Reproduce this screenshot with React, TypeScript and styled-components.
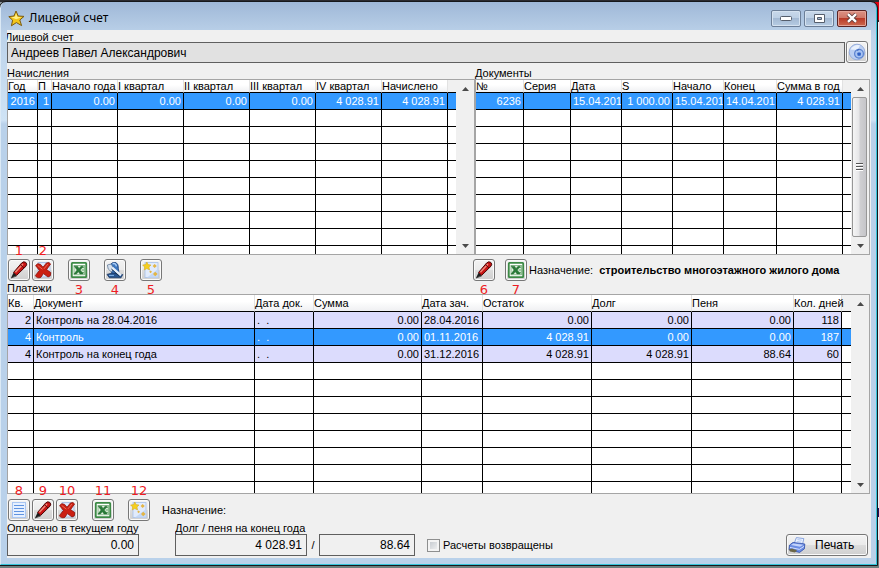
import React from "react";
import styled, { createGlobalStyle, css } from "styled-components";

const GlobalStyle = createGlobalStyle`
  *, *::before, *::after { box-sizing: border-box; }
  html, body { margin: 0; padding: 0; }
  body {
    font-family: "Liberation Sans", Arial, sans-serif;
    font-size: 11px;
    line-height: 12px;
    color: #000;
  }
  button, input { font: inherit; color: inherit; margin: 0; }
`;

/* ---------- window frame ---------- */

const Desktop = styled.div`
  min-height: 100vh;
  padding: 2px 2px 2px 0;
  background:
    linear-gradient(#2b2b30, #2b2b30) top / 100% 2px no-repeat,
    linear-gradient(#6c7d7d, #6c7d7d) bottom / 100% 2px no-repeat,
    linear-gradient(90deg, #8f9aa0, #8f9aa0) left top / 50% 20px no-repeat,
    linear-gradient(#e00010 0 20px, #222 20px 22px, #e4f1f8 22px 508px, #1a1060 508px 517px, #e4f1f8 517px 540px, #6c7d7d 540px);
`;

const Window = styled.main`
  padding: 0 5px 6px 6px;
  border: solid #35c3d8;
  border-width: 0 1px 1px 0;
  border-left: 1px solid #dbe9f5;
  border-radius: 6px 6px 0 0;
  outline: 1px solid #16181c;
  background: linear-gradient(#9fb8d8 0, #bdd3ea 34px, #cfe3f5 118px, #b9d1ea 122px);
`;

const TitleBar = styled.header`
  display: flex;
  align-items: center;
  gap: 4px;
  height: 28px;
  padding: 4px 4px 0 1px;
`;

const Title = styled.h1`
  flex: 1;
  margin: 0;
  font: 400 12px/18px "Noto Sans", "Open Sans", sans-serif;
`;

const WindowButtons = styled.div`
  display: flex;
  gap: 3px;
`;

const WindowButton = styled.button<{ $danger?: boolean }>`
  display: grid;
  place-items: center;
  width: 30px;
  height: 17px;
  padding: 0;
  border: 1px solid ${(p) => (p.$danger ? "#5a2323" : "#6c7f98")};
  border-radius: 2px;
  box-shadow: inset 0 0 0 1px ${(p) => (p.$danger ? "#e4a397" : "#d5e2f0")};
  background: ${(p) =>
    p.$danger
      ? "linear-gradient(#dc9285 0, #cf7566 48%, #b93a28 50%, #cc6a50 100%)"
      : "linear-gradient(#c8d8ea 0, #bccfe4 48%, #a3b9d3 50%, #b7cce3 100%)"};
`;

const Client = styled.div`
  padding: 0 1px 2px 0;
  background: #f0f0f0;
`;

/* ---------- labels and fields ---------- */

const Caption = styled.label<{ $clipped?: boolean }>`
  display: block;
  height: ${(p) => (p.$clipped ? "11px" : "12px")};
  line-height: ${(p) => (p.$clipped ? "14px" : "12px")};
  text-indent: ${(p) => (p.$clipped ? "-2px" : "0")};
  overflow: hidden;
  white-space: nowrap;
`;

const PaneTitle = styled.h2<{ $tall?: boolean }>`
  margin: 0;
  padding-top: ${(p) => (p.$tall ? "4px" : "0")};
  font: inherit;
  white-space: nowrap;
`;

const NameRow = styled.div`
  display: flex;
  align-items: flex-end;
  gap: 1px;
  padding-right: 2px;
`;

const Field = styled.input<{ $size: "fill" | "sum" | "fine" }>`
  display: block;
  height: ${(p) => (p.$size === "fill" ? "21px" : "22px")};
  padding: 0 4px;
  border: 1px solid #5f5f5f;
  border-radius: 0;
  outline: 0;
  background: ${(p) => (p.$size === "fill" ? "#e1e1e1" : "#f0f0f0")};
  font-size: 12px;
  ${(p) =>
    p.$size === "fill"
      ? css`flex: 1; min-width: 0; padding-left: 3px;`
      : css`width: ${p.$size === "sum" ? "132px" : "96px"}; text-align: right;`}
`;

/* ---------- grids ---------- */

const TwoPanes = styled.div`
  display: grid;
  grid-template-columns: 468fr 395fr;
`;

const TwoToolbars = styled.div`
  display: grid;
  grid-template-columns: 465fr 398fr;
`;

const Pane = styled.div`
  display: grid;
  grid-template-columns: minmax(0, 1fr) 18px;
  border: 1px solid #a5a5a5;
  background: #fff;
`;

const DataTable = styled.table`
  width: 100%;
  table-layout: fixed;
  border-collapse: separate;
  border-spacing: 0;
`;

const HeadCell = styled.th<{ $tall?: boolean }>`
  height: ${(p) => (p.$tall ? "17px" : "13px")};
  padding: 0;
  border-bottom: 1px solid #000;
  border-right: 1px solid #e2e2e2;
  background: linear-gradient(#fff 40%, #eff0f2);
  font-weight: 400;
  line-height: 12px;
  text-align: left;
  white-space: nowrap;
  &:last-child { border-right: 0; background: #f0f0f0; }
  &:nth-last-child(2) { position: relative; }
`;

type Tone = "plain" | "lilac" | "active";

const BodyRow = styled.tr<{ $tone: Tone }>`
  color: ${(p) => (p.$tone === "active" ? "#fff" : "#000")};
  background: ${(p) => ({ plain: "#fff", lilac: "#dcdcfd", active: "#3399ff" })[p.$tone]};
`;

const BodyCell = styled.td<{ $right?: boolean }>`
  height: 17px;
  padding: 0 2px;
  border-right: 1px solid #000;
  border-bottom: 1px solid #000;
  line-height: 14px;
  text-align: ${(p) => (p.$right ? "right" : "left")};
  white-space: pre;
  overflow: hidden;
  &:last-child { border-right: 0; }
`;

const FillerCell = styled(BodyCell)<{ $white: boolean }>`
  background: ${(p) => (p.$white ? "#fff" : "inherit")};
`;

const TailCell = styled.td<{ $height: number }>`
  height: ${(p) => p.$height}px;
  padding: 0;
  border-right: 1px solid #000;
  &:last-child { border-right: 0; }
`;

const ScrollBar = styled.div`
  display: flex;
  flex-direction: column;
  justify-content: space-between;
  padding: 0 1px;
  background: #f0f0f0;
`;

const ScrollArrow = styled.button`
  display: grid;
  place-items: center;
  width: 16px;
  height: 17px;
  padding: 0;
  border: 0;
  background: transparent;
`;

const ScrollThumb = styled.div`
  flex: 1;
  display: grid;
  place-items: center;
  width: 15px;
  border: 1px solid #979797;
  border-radius: 2px;
  background: linear-gradient(90deg, #f5f5f5 0, #e6e6e8 45%, #cfcfd2 55%, #c5c5c9 100%);
`;

/* ---------- toolbars ---------- */

const Toolbar = styled.div<{ $low?: boolean }>`
  display: flex;
  align-items: center;
  padding: ${(p) => (p.$low ? "5px" : "4px")} 1px 1px;
`;

const ButtonGroup = styled.div<{ $after: number }>`
  display: flex;
  gap: 2px;
  margin-right: ${(p) => p.$after}px;
`;

const buttonFace = css`
  border: 1px solid #777;
  border-radius: 3px;
  box-shadow: inset 0 0 0 1px #fafafa;
  background: linear-gradient(#f3f3f3 0, #ebebeb 49%, #dddddd 50%, #cfcfcf 100%);
`;

const ToolButton = styled.button`
  position: relative;
  display: grid;
  place-items: center;
  flex: none;
  width: 22px;
  height: 22px;
  padding: 0;
  ${buttonFace}
`;

const Callout = styled.span<{ $below?: boolean }>`
  position: absolute;
  left: 50%;
  ${(p) => (p.$below ? "top: 22px;" : "bottom: 21px;")}
  transform: translateX(-50%);
  font: 13px/16px "DejaVu Sans", sans-serif;
  color: #ee1c24;
  pointer-events: none;
`;

const Purpose = styled.p<{ $near?: boolean }>`
  display: flex;
  gap: 6px;
  margin: 0;
  padding-left: ${(p) => (p.$near ? "2px" : "12px")};
  white-space: nowrap;
`;

/* ---------- footer ---------- */

const Footer = styled.div`
  display: flex;
  align-items: flex-end;
  padding-right: 2px;
`;

const FieldGroup = styled.div<{ $after: number }>`
  margin-right: ${(p) => p.$after}px;
`;

const Slash = styled.span`
  width: 12px;
  text-align: center;
  line-height: 22px;
`;

const CheckLabel = styled.label`
  display: flex;
  align-items: center;
  gap: 3px;
  height: 22px;
  padding-left: 12px;
  white-space: nowrap;
`;

const Check = styled.input`
  appearance: none;
  width: 13px;
  height: 13px;
  border: 1px solid #8e8f8f;
  background: linear-gradient(135deg, #bfc4ca, #f6f6f6);
  box-shadow: inset 0 0 0 2px #f4f4f4;
`;

const PrintButton = styled.button`
  display: flex;
  align-items: center;
  gap: 9px;
  width: 82px;
  height: 22px;
  margin-left: auto;
  padding: 0 1px;
  font-size: 12px;
  ${buttonFace}
`;

/* ---------- icons ---------- */

const StarIcon = () => (
  <svg width="17" height="17" viewBox="0 0 17 17" aria-hidden="true">
    <path d="M8 1 L10.2 6 L16 6.4 L11.8 10 L13.6 15.6 L8.4 12.6 L3.4 15.8 L4.6 10.2 L.8 6.6 L6 6 Z" fill="#f3c61c" stroke="#7b5a10" strokeLinejoin="round" />
    <path d="M8 3.2 L9.4 7 L13.4 7.3 L8.2 9.2 L3.2 7.2 L7 6.8 Z" fill="#fff08a" />
  </svg>
);

const PenIcon = () => (
  <svg width="18" height="18" viewBox="0 0 18 18" aria-hidden="true">
    <path d="M1 17 L3.6 11.4 L6.6 14.4 Z" fill="#1c1c1c" />
    <path d="M3.6 11.4 L11.6 2 Q13.6 0 15.8 1.4 Q17.6 3 16 5.2 L6.6 14.4 Z" fill="#c81414" stroke="#4a0808" />
    <path d="M5.4 11.2 L13 3" stroke="#f08a7c" strokeWidth="1.4" />
    <path d="M10.4 3.6 L14 7" stroke="#5c0c0c" />
    <path d="M1 17 L6.6 15" stroke="#333" strokeWidth=".8" />
  </svg>
);

const DeleteIcon = () => (
  <svg width="18" height="18" viewBox="0 0 18 18" aria-hidden="true">
    <path d="M4 1.5 H13 L16 4.5 V16 H4 Z" fill="#dde8fb" stroke="#9db6e0" strokeWidth=".8" />
    <path d="M1.6 4.6 Q3.4 1.4 6.6 3.4 L9 6.2 L12.4 2 Q15.4 .4 16.6 3 L12.6 8.6 L16.8 11.6 Q17.4 15.6 14 16 L9.4 12.6 L6.8 16.4 Q3 17.8 1.4 14.6 L5.4 9.4 Z" fill="#cb1f12" stroke="#8b130c" strokeWidth=".8" />
    <path d="M3.6 4.4 L8.4 8.2 M14 3 L10 7.8" stroke="#e8695a" fill="none" />
  </svg>
);

const ExcelIcon = () => (
  <svg width="18" height="18" viewBox="0 0 18 18" aria-hidden="true">
    <rect x="1.8" y="1.8" width="14.4" height="14.4" rx=".6" fill="#fff" stroke="#3c8a45" strokeWidth="1.8" />
    <rect x="4" y="4.4" width="10.4" height="9.4" fill="#e1f1df" stroke="#74ad77" strokeWidth=".8" />
    <path d="M11 6.6 H14 M11.6 9 H14 M11 11.4 H14" stroke="#5ba463" />
    <path d="M4.2 5.2 H7.6 L9 7.4 L11 5.2 H13.4 L10.2 9 L13.4 13 H10 L8.4 10.8 L6.4 13 H4 L7 9 Z" fill="#2a7c39" stroke="#1b5d28" strokeWidth=".4" />
  </svg>
);

const SearchIcon = () => (
  <svg width="18" height="18" viewBox="0 0 18 18" aria-hidden="true">
    <path d="M4 4 Q6 .6 10 1.6 Q12.6 3 12.4 7.6 L13 12.4 L6 13 Z" fill="#3c76bf" stroke="#1c3f78" strokeWidth=".8" />
    <path d="M1.4 4 L5 3 L8 7.4 L5.4 11 L2.2 8 Z" fill="#d5e0ee" stroke="#55708f" strokeWidth=".7" />
    <path d="M6.6 2.8 Q9.8 1.6 10.4 5.4" fill="none" stroke="#a9cdf5" strokeWidth="1.4" />
    <path d="M1 13.4 L6 12 L16.8 13.6 L15 16.8 H3.4 Z" fill="#27548f" stroke="#142e58" strokeWidth=".7" />
    <path d="M6.4 6.8 L15 14.4" stroke="#e6effa" strokeWidth="2.4" />
    <path d="M5.4 8 L13.6 15.4" stroke="#1d3350" />
    <path d="M3 14.4 H8" stroke="#83b4ea" />
  </svg>
);

const SparkIcon = () => (
  <svg width="18" height="18" viewBox="0 0 18 18" aria-hidden="true">
    <rect x="3" y="1.6" width="13" height="15" fill="#e1ebfc" stroke="#a9c1e8" strokeWidth=".8" />
    <path d="M16 8 V16.6 H5 Z" fill="#c4d8f6" />
    <path d="M4.8 1 L6.2 3.6 L9 4 L7 6 L7.6 9 L4.8 7.6 L2.2 9 L2.6 6 L.6 4 L3.6 3.6 Z" fill="#f5cf1e" stroke="#d0a41c" strokeWidth=".5" />
    <path d="M12.6 3 L14.8 5 L12.6 7 L10.6 5 Z M13.2 10.8 L15.6 13 L13.2 15.2 L11 13 Z M8.6 9.4 L10 10.8 L8.6 12.2 L7.2 10.8 Z" fill="#e3b545" />
  </svg>
);

const ListIcon = () => (
  <svg width="16" height="18" viewBox="0 0 16 18" aria-hidden="true">
    <rect x="1.5" y="1.5" width="13" height="15" fill="#e6f0ff" stroke="#a9c6f2" />
    <path d="M3 4.5 H13 M3 7.5 H13 M3 10.5 H13 M3 13.5 H13" stroke="#5f93e0" />
  </svg>
);

const DiscIcon = () => (
  <svg width="18" height="18" viewBox="0 0 18 18" aria-hidden="true">
    <circle cx="9" cy="9" r="7.8" fill="#bccff2" stroke="#98afdc" />
    <path d="M2.4 6.6 Q5.6 1 12 2.2 L9.6 7 Z" fill="#e9f1fd" />
    <circle cx="11" cy="10.8" r="4.4" fill="#a9c4f2" stroke="#5b82cf" strokeWidth="1.2" />
    <rect x="9.4" y="9.4" width="3.4" height="3.4" rx=".8" fill="#2e5fc4" />
    <path d="M9.4 8 L10.8 6.2" stroke="#3f69bf" />
  </svg>
);

const PrinterIcon = () => (
  <svg width="18" height="18" viewBox="0 0 18 18" aria-hidden="true">
    <path d="M6 8 L8.4 1.6 L15.8 2.6 L14.4 9 Z" fill="#eef4ff" stroke="#6f8fd6" strokeWidth=".8" />
    <path d="M9.4 3.6 L13.8 4.2 M8.8 5.6 L13.4 6.2" stroke="#9db7ec" strokeWidth=".8" />
    <path d="M1.6 9 L5 6.4 L16.8 8 L16.4 12.8 L11.6 16.4 L1 13.8 Z" fill="#6c8de4" stroke="#2f4ea8" strokeWidth=".8" />
    <path d="M3 9 L5.4 7.4 L15.4 8.8 L12 10.8 Z" fill="#c3d3fb" />
    <path d="M2 11.4 L11.4 13.4 L16 10.4" fill="none" stroke="#d3e0ff" />
    <path d="M1 13.6 L4 12.6 L9 14.2 L7 16.4 L2 15.4 Z" fill="#6b6648" />
  </svg>
);

const Triangle = ({ down = false }: { down?: boolean }) => (
  <svg width="7" height="4" viewBox="0 0 7 4" aria-hidden="true">
    <path d={down ? "M0 0 H7 L3.5 4 Z" : "M0 4 L3.5 0 L7 4 Z"} fill="#4a4a4a" />
  </svg>
);

const Grip = () => (
  <svg width="7" height="8" viewBox="0 0 7 8" aria-hidden="true">
    <path d="M0 .5 H7 M0 3.5 H7 M0 6.5 H7" stroke="#555" />
    <path d="M0 1.5 H7 M0 4.5 H7 M0 7.5 H7" stroke="#fff" />
  </svg>
);

/* ---------- data grid ---------- */

type Column = { title: string; width: number; right?: boolean };
type Row = { tone: Tone; cells: string[] };

type GridProps = {
  label: string;
  columns: Column[];
  rows: Row[];
  total: number;
  filler: number;
  tail: number;
  tallHead?: boolean;
  thumb?: boolean;
};

function DataGrid({ label, columns, rows, total, filler, tail, tallHead, thumb }: GridProps) {
  const blanks: Row[] = Array.from({ length: total - rows.length }, () => ({ tone: "plain", cells: [] }));
  return (
    <Pane>
      <DataTable aria-label={label}>
        <colgroup>
          {columns.map((c) => (
            <col key={c.title} width={c.width} />
          ))}
          <col width={filler} />
        </colgroup>
        <thead>
          <tr>
            {columns.map((c) => (
              <HeadCell key={c.title} $tall={tallHead}>{c.title}</HeadCell>
            ))}
            <HeadCell $tall={tallHead} />
          </tr>
        </thead>
        <tbody>
          {[...rows, ...blanks].map((row, r) => (
            <BodyRow key={r} $tone={row.tone}>
              {columns.map((c, i) => (
                <BodyCell key={c.title} $right={c.right}>{row.cells[i]}</BodyCell>
              ))}
              <FillerCell $white={row.tone !== "active"} />
            </BodyRow>
          ))}
          <tr>
            {columns.map((c) => (
              <TailCell key={c.title} $height={tail} />
            ))}
            <TailCell $height={tail} />
          </tr>
        </tbody>
      </DataTable>
      <ScrollBar>
        <ScrollArrow type="button" aria-label="Вверх"><Triangle /></ScrollArrow>
        {thumb && <ScrollThumb><Grip /></ScrollThumb>}
        <ScrollArrow type="button" aria-label="Вниз"><Triangle down /></ScrollArrow>
      </ScrollBar>
    </Pane>
  );
}

const chargeColumns: Column[] = [
  { title: "Год", width: 30, right: true },
  { title: "П", width: 14, right: true },
  { title: "Начало года", width: 66, right: true },
  { title: "I квартал", width: 66, right: true },
  { title: "II квартал", width: 66, right: true },
  { title: "III квартал", width: 66, right: true },
  { title: "IV квартал", width: 66, right: true },
  { title: "Начислено", width: 66, right: true },
];

const chargeRows: Row[] = [
  { tone: "active", cells: ["2016", "1", "0.00", "0.00", "0.00", "0.00", "4 028.91", "4 028.91"] },
];

const documentColumns: Column[] = [
  { title: "№", width: 48, right: true },
  { title: "Серия", width: 47 },
  { title: "Дата", width: 51 },
  { title: "S", width: 51, right: true },
  { title: "Начало", width: 51 },
  { title: "Конец", width: 53 },
  { title: "Сумма в год", width: 66, right: true },
];

const documentRows: Row[] = [
  { tone: "active", cells: ["6236", "", "15.04.2016", "1 000.00", "15.04.2016", "14.04.2017", "4 028.91"] },
];

const paymentColumns: Column[] = [
  { title: "Кв.", width: 26, right: true },
  { title: "Документ", width: 221 },
  { title: "Дата док.", width: 59 },
  { title: "Сумма", width: 108, right: true },
  { title: "Дата зач.", width: 61 },
  { title: "Остаток", width: 109, right: true },
  { title: "Долг", width: 100, right: true },
  { title: "Пеня", width: 102, right: true },
  { title: "Кол. дней", width: 48, right: true },
];

const paymentRows: Row[] = [
  { tone: "lilac", cells: ["2", "Контроль на 28.04.2016", ".  .", "0.00", "28.04.2016", "0.00", "0.00", "0.00", "118"] },
  { tone: "active", cells: ["4", "Контроль", ".  .", "0.00", "01.11.2016", "4 028.91", "0.00", "0.00", "187"] },
  { tone: "lilac", cells: ["4", "Контроль на конец года", ".  .", "0.00", "31.12.2016", "4 028.91", "4 028.91", "88.64", "60"] },
];

type ToolProps = { n: number; name: string; icon: React.ReactNode; below?: boolean };

const Tool = ({ n, name, icon, below }: ToolProps) => (
  <ToolButton type="button" aria-label={name}>
    {icon}
    <Callout $below={below}>{n}</Callout>
  </ToolButton>
);

export default function App() {
  return (
    <>
      <GlobalStyle />
      <Desktop>
        <Window>
          <TitleBar>
            <StarIcon />
            <Title>Лицевой счет</Title>
            <WindowButtons>
              <WindowButton type="button" aria-label="Свернуть">
                <svg width="12" height="6" viewBox="0 0 12 6"><rect x=".5" y="1.5" width="11" height="4" rx="1" fill="#fff" stroke="#555e6c" /></svg>
              </WindowButton>
              <WindowButton type="button" aria-label="Развернуть">
                <svg width="11" height="9" viewBox="0 0 11 9"><path d="M.5 .5 H10.5 V8.5 H.5 Z M3.5 3.5 V5.5 H7.5 V3.5 Z" fill="#fff" fillRule="evenodd" stroke="#555e6c" /></svg>
              </WindowButton>
              <WindowButton type="button" aria-label="Закрыть" $danger>
                <svg width="12" height="10" viewBox="0 0 12 10">
                  <path d="M2 1.2 L10 8.8 M10 1.2 L2 8.8" stroke="#5c3a3a" strokeWidth="4" />
                  <path d="M2 1.2 L10 8.8 M10 1.2 L2 8.8" stroke="#fff" strokeWidth="2.4" />
                </svg>
              </WindowButton>
            </WindowButtons>
          </TitleBar>
          <Client>
            <Caption htmlFor="account" $clipped>Лицевой счет</Caption>
            <NameRow>
              <Field id="account" $size="fill" readOnly value="Андреев Павел Александрович" />
              <ToolButton type="button" aria-label="Открыть карточку"><DiscIcon /></ToolButton>
            </NameRow>

            <TwoPanes>
              <section>
                <PaneTitle $tall>Начисления</PaneTitle>
                <DataGrid label="Начисления" columns={chargeColumns} rows={chargeRows} total={9} filler={8} tail={8} />
              </section>
              <section>
                <PaneTitle $tall>Документы</PaneTitle>
                <DataGrid label="Документы" columns={documentColumns} rows={documentRows} total={9} filler={8} tail={8} thumb />
              </section>
            </TwoPanes>

            <TwoToolbars>
              <Toolbar>
                <ButtonGroup $after={14}>
                  <Tool n={1} name="Изменить начисление" icon={<PenIcon />} />
                  <Tool n={2} name="Удалить начисление" icon={<DeleteIcon />} />
                </ButtonGroup>
                <ButtonGroup $after={14}>
                  <Tool n={3} name="Начисления в Excel" icon={<ExcelIcon />} below />
                </ButtonGroup>
                <ButtonGroup $after={14}>
                  <Tool n={4} name="Просмотр" icon={<SearchIcon />} below />
                </ButtonGroup>
                <Tool n={5} name="Рассчитать" icon={<SparkIcon />} below />
              </Toolbar>
              <Toolbar>
                <ButtonGroup $after={10}>
                  <Tool n={6} name="Изменить документ" icon={<PenIcon />} below />
                </ButtonGroup>
                <Tool n={7} name="Документы в Excel" icon={<ExcelIcon />} below />
                <Purpose $near>
                  <span>Назначение:</span>
                  <strong>строительство многоэтажного жилого дома</strong>
                </Purpose>
              </Toolbar>
            </TwoToolbars>

            <PaneTitle>Платежи</PaneTitle>
            <DataGrid label="Платежи" columns={paymentColumns} rows={paymentRows} total={10} filler={9} tail={11} tallHead />
            <Toolbar $low>
              <ButtonGroup $after={14}>
                <Tool n={8} name="Просмотр платежа" icon={<ListIcon />} />
                <Tool n={9} name="Изменить платеж" icon={<PenIcon />} />
                <Tool n={10} name="Удалить платеж" icon={<DeleteIcon />} />
              </ButtonGroup>
              <ButtonGroup $after={14}>
                <Tool n={11} name="Платежи в Excel" icon={<ExcelIcon />} />
              </ButtonGroup>
              <Tool n={12} name="Пересчитать" icon={<SparkIcon />} />
              <Purpose>Назначение:</Purpose>
            </Toolbar>

            <Footer>
              <FieldGroup $after={36}>
                <Caption htmlFor="paid">Оплачено в текущем году</Caption>
                <Field id="paid" $size="sum" readOnly value="0.00" />
              </FieldGroup>
              <FieldGroup $after={0}>
                <Caption htmlFor="debt">Долг / пеня на конец года</Caption>
                <Field id="debt" $size="sum" readOnly value="4 028.91" />
              </FieldGroup>
              <Slash>/</Slash>
              <Field aria-label="Пеня на конец года" $size="fine" readOnly value="88.64" />
              <CheckLabel>
                <Check type="checkbox" />
                Расчеты возвращены
              </CheckLabel>
              <PrintButton type="button">
                <PrinterIcon />
                Печать
              </PrintButton>
            </Footer>
          </Client>
        </Window>
      </Desktop>
    </>
  );
}
